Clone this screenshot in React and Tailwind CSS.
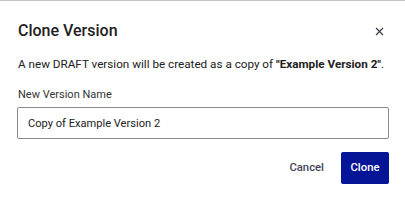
import { useState } from 'react'

export default function App() {
  const [name, setName] = useState('Copy of Example Version 2')

  return (
    <div className="w-[405px] h-[201px] bg-white border-t border-[#c4c4c4] font-['Roboto',sans-serif] text-[#212121] overflow-hidden">
      <div className="px-[18px]">
        <div className="flex items-center justify-between pt-[18px]">
          <h2 className="text-[16px] leading-[24px] font-medium">Clone Version</h2>
          <button className="w-4 h-4 flex items-center justify-center text-[#3c3c4e]">
            <svg width="9" height="9" viewBox="0 0 9 9" fill="none" stroke="currentColor" strokeWidth="1.2">
              <path d="M1 1L8 8M8 1L1 8" />
            </svg>
          </button>
        </div>
        <p className="mt-[13px] text-[11.7px] leading-[16px] whitespace-nowrap">
          A new DRAFT version will be created as a copy of <span className="font-bold">"Example Version 2"</span>.
        </p>
        <label className="block mt-[15px] text-[11px] leading-[16px] text-[#333]">New Version Name</label>
        <input
          value={name}
          onChange={e => setName(e.target.value)}
          className="mt-[4px] w-[372px] -ml-[1px] h-[32px] border border-[#8a8a8a] rounded-[2px] px-[10px] text-[11.1px] text-[#212121] outline-none"
        />
        <div className="flex justify-end items-center gap-[16px] mt-[13px] -mr-[2px]">
          <button className="px-[1px] text-[11.3px] font-medium text-[#45455a]">Cancel</button>
          <button className="w-[48px] h-[32px] rounded-[2px] bg-[#061497] text-white text-[11.3px] font-medium">Clone</button>
        </div>
      </div>
    </div>
  )
}
